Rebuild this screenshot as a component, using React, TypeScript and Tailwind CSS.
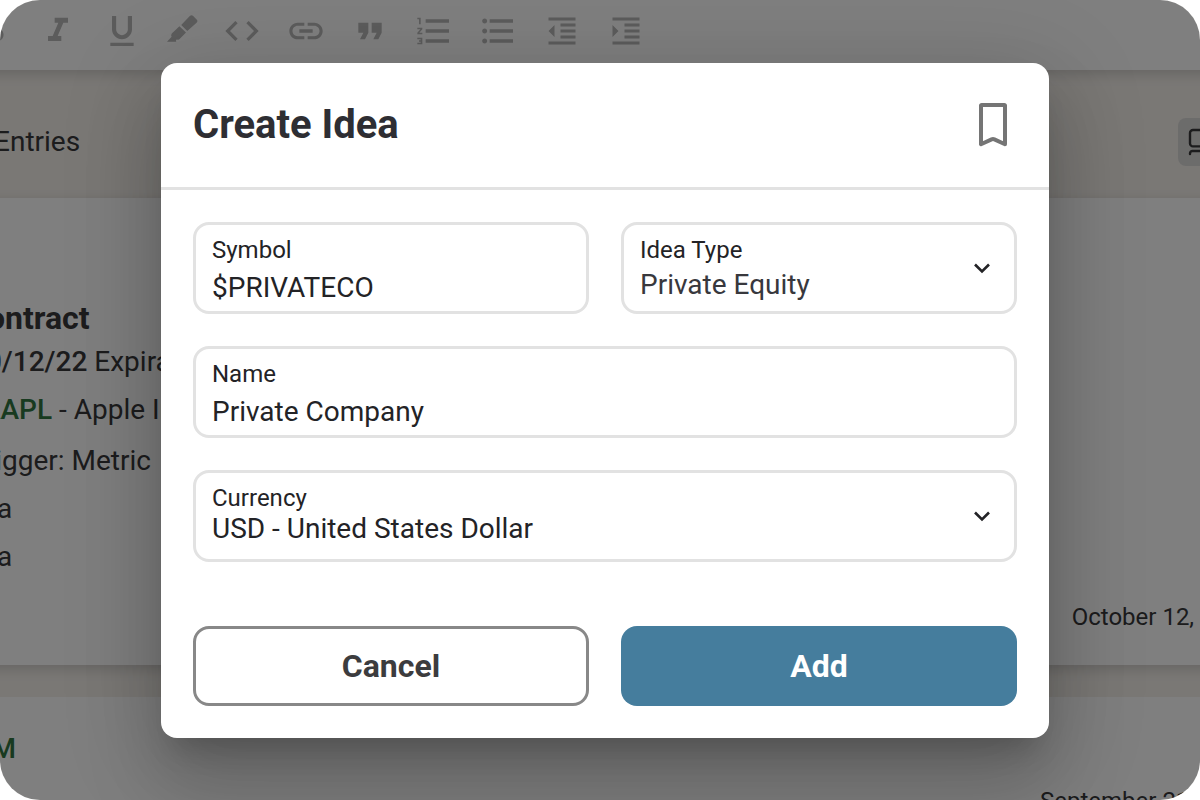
import { useState } from "react";
import type { ReactNode } from "react";
import {
  MdCode,
  MdFormatBold,
  MdFormatIndentDecrease,
  MdFormatIndentIncrease,
  MdFormatItalic,
  MdFormatListBulleted,
  MdFormatListNumbered,
  MdFormatQuote,
  MdFormatUnderlined,
  MdInsertLink,
} from "react-icons/md";

function HighlighterIcon() {
  return (
    <svg viewBox="0 0 32 32" className="size-8" fill="currentColor" aria-hidden="true">
      <path d="M15.2 9.9 23.8 1.1a2.4 2.4 0 0 1 3.4 0l3.4 3.3a2.4 2.4 0 0 1 0 3.4L21.3 16z" />
      <path d="M13.4 11.2l6.6 6.4-6.4 6.4a2 2 0 0 1-2.7.2l-1 1.2.4 1.4H1l4.6-5a3 3 0 0 1 .2-3.4z" />
    </svg>
  );
}

function BookmarkIcon() {
  return (
    <svg viewBox="0 0 28 44" className="h-11 w-7" fill="none" stroke="currentColor" strokeWidth="4" strokeLinejoin="round" aria-hidden="true">
      <path d="M2.6 2h22.8a.6.6 0 0 1 .6.6v38.6l-10.6-4.8a3.4 3.4 0 0 0-2.8 0L2 41.2V2.6a.6.6 0 0 1 .6-.6z" />
    </svg>
  );
}

function ChevronIcon() {
  return (
    <svg
      viewBox="0 0 24 24"
      className="pointer-events-none absolute top-1/2 right-5 size-6 -translate-y-1/2 text-[#232326]"
      fill="none"
      stroke="currentColor"
      strokeWidth="2.6"
      aria-hidden="true"
    >
      <path d="M5 8.5l7 7 7-7" />
    </svg>
  );
}

function LayoutIcon() {
  return (
    <svg viewBox="0 0 28 28" className="size-7" fill="none" stroke="currentColor" strokeWidth="2.4" strokeLinecap="round" aria-hidden="true">
      <rect x="2" y="2" width="24" height="16.4" rx="3" />
      <path d="M2 26v-.6a2.4 2.4 0 0 1 2.4-2.4h19.2a2.4 2.4 0 0 1 2.4 2.4v.6" />
    </svg>
  );
}

const tools: { label: string; icon: ReactNode }[] = [
  { label: "Bold", icon: <MdFormatBold className="size-10" /> },
  { label: "Italic", icon: <MdFormatItalic className="size-10" /> },
  { label: "Underline", icon: <MdFormatUnderlined className="size-10" /> },
  { label: "Highlight", icon: <HighlighterIcon /> },
  { label: "Code", icon: <MdCode className="size-10" /> },
  { label: "Link", icon: <MdInsertLink className="size-10" /> },
  { label: "Quote", icon: <MdFormatQuote className="size-10" /> },
  { label: "Numbered list", icon: <MdFormatListNumbered className="size-10" /> },
  { label: "Bulleted list", icon: <MdFormatListBulleted className="size-10" /> },
  { label: "Decrease indent", icon: <MdFormatIndentDecrease className="mx-0.5 size-9" /> },
  { label: "Increase indent", icon: <MdFormatIndentIncrease className="mx-0.5 size-9" /> },
];

/** Journal page under the dialog, scrolled a little past both window edges. */
function Journal() {
  return (
    <main className="-mx-[26px] flex h-full flex-col overflow-hidden bg-[#f4f0eb] text-[#38383a]">
      <div className="relative flex h-[70px] shrink-0 items-start gap-6 bg-white pt-[11px] text-[#b8b8b8] shadow-[0_4px_12px_rgba(0,0,0,0.16)]">
        {tools.map((t) => (
          <button key={t.label} type="button" aria-label={t.label} className="flex h-10 shrink-0 items-center">
            {t.icon}
          </button>
        ))}
      </div>

      <div className="flex h-32 shrink-0 items-center justify-between pt-4">
        <h2 className="pl-5 text-[28px] leading-8">Entries</h2>
        <button
          type="button"
          aria-label="Change layout"
          className="flex size-12 items-center justify-center rounded-lg bg-[#d9d8d6]"
        >
          <LayoutIcon />
        </button>
      </div>

      <article className="flex h-[467px] shrink-0 flex-col bg-white pt-[102px] text-[28px] leading-8 whitespace-nowrap shadow-[0_4px_12px_rgba(0,0,0,0.16)]">
        <h3 className="-ml-2 text-[32px] leading-9 font-bold">Contract</h3>
        <p className="-ml-1 pt-2.5">
          <span className="font-medium">10/12/22</span> Expiration
        </p>
        <p className="-ml-2 pt-4">
          <span className="font-medium text-[#307440]">$AAPL</span> - Apple Inc
        </p>
        <p className="-ml-1 pt-[19px]">Trigger: Metric</p>
        <p className="-ml-1 pt-4">n/a</p>
        <p className="-ml-1 pt-4">n/a</p>
        <time className="-mr-7 self-end pt-[30px] text-2xl leading-7">October 12, 2022</time>
      </article>

      <article className="mt-8 flex shrink-0 flex-col bg-white pt-9 text-[28px] leading-8 whitespace-nowrap">
        <span className="-ml-6 font-medium text-[#307440]">$IBM</span>
        <time className="-mr-7 self-end pt-[22px] text-2xl leading-7">September 21, 2022</time>
      </article>
    </main>
  );
}

const box = "relative flex h-[92px] flex-col rounded-2xl border-3 border-[#e2e2e2] px-4 pt-[11px]";
const labelText = "text-2xl leading-7 text-[#232326]";
const control = "w-full bg-transparent text-[28px] outline-none";

export default function App() {
  const [symbol, setSymbol] = useState("$PRIVATECO");
  const [name, setName] = useState("Private Company");
  const [ideaType, setIdeaType] = useState("Private Equity");
  const [currency, setCurrency] = useState("USD");

  return (
    <div className="relative h-screen overflow-hidden rounded-[40px] bg-white font-['Roboto',sans-serif]">
      <Journal />

      <div className="absolute inset-0 flex items-center justify-center bg-black/50 pl-[10px]">
        <div
          role="dialog"
          aria-modal="true"
          aria-labelledby="dialog-title"
          className="w-full max-w-[888px] rounded-2xl bg-white shadow-[0_22px_30px_-14px_rgba(0,0,0,0.2),0_48px_76px_6px_rgba(0,0,0,0.14),0_18px_92px_16px_rgba(0,0,0,0.12)]"
        >
          <header className="flex h-[127px] items-center justify-between border-b-3 border-[#e2e2e2] px-8">
            <h1 id="dialog-title" className="text-[40px] leading-12 font-bold text-[#2e2e33]">
              Create Idea
            </h1>
            <button type="button" aria-label="Bookmark" className="flex size-12 items-center justify-center text-[#757575]">
              <BookmarkIcon />
            </button>
          </header>

          <form className="grid grid-cols-2 gap-8 p-8" onSubmit={(e) => e.preventDefault()}>
            <div className={box}>
              <label htmlFor="symbol" className={labelText}>Symbol</label>
              <input
                id="symbol"
                className={`${control} mt-2 leading-8 text-[#232326]`}
                value={symbol}
                onChange={(e) => setSymbol(e.target.value)}
              />
            </div>

            <div className={box}>
              <label htmlFor="idea-type" className={labelText}>Idea Type</label>
              <select
                id="idea-type"
                className={`${control} mt-1 appearance-none leading-[34px] text-[#38383d]`}
                value={ideaType}
                onChange={(e) => setIdeaType(e.target.value)}
              >
                <option>Private Equity</option>
              </select>
              <ChevronIcon />
            </div>

            <div className={`${box} col-span-2`}>
              <label htmlFor="name" className={labelText}>Name</label>
              <input
                id="name"
                className={`${control} mt-2 leading-8 text-[#232326]`}
                value={name}
                onChange={(e) => setName(e.target.value)}
              />
            </div>

            <div className={`${box} col-span-2`}>
              <label htmlFor="currency" className={labelText}>Currency</label>
              <select
                id="currency"
                className={`${control} appearance-none leading-[34px] text-[#232326]`}
                value={currency}
                onChange={(e) => setCurrency(e.target.value)}
              >
                <option value="USD">USD - United States Dollar</option>
              </select>
              <ChevronIcon />
            </div>

            <button type="button" className="mt-8 h-20 rounded-2xl border-3 border-[#888888] text-[32px] leading-10 font-bold text-[#3c3c3e]">
              Cancel
            </button>
            <button type="submit" className="mt-8 h-20 rounded-2xl bg-[#457d9d] text-[32px] leading-10 font-bold text-white">
              Add
            </button>
          </form>
        </div>
      </div>
    </div>
  );
}
